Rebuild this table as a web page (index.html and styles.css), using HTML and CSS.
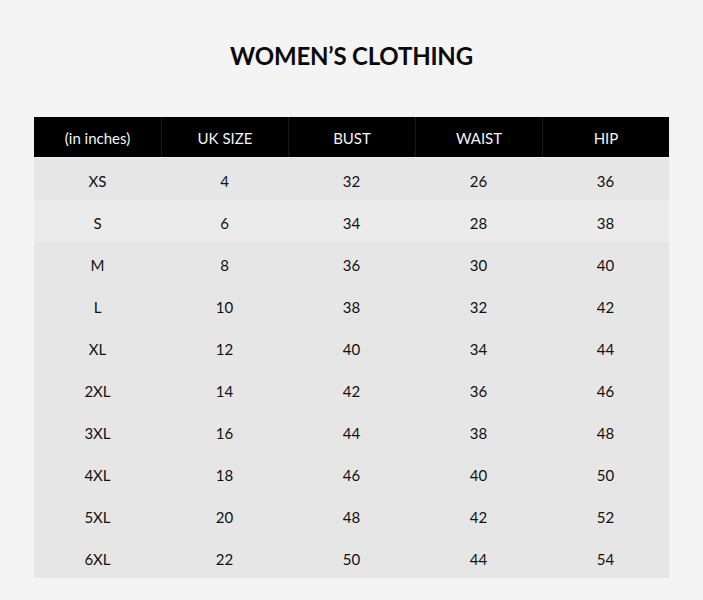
FILE: index.html
```html
<!DOCTYPE html>
<html lang="en">
<head>
<meta charset="utf-8">
<title>Women's Clothing Size Chart</title>
<link rel="stylesheet" href="styles.css">
</head>
<body>
<main class="page">
  <h1 class="title">WOMEN’S CLOTHING</h1>
  <div class="chart">
    <div class="row head">
      <div class="cell">(in inches)</div>
      <div class="cell">UK SIZE</div>
      <div class="cell">BUST</div>
      <div class="cell">WAIST</div>
      <div class="cell">HIP</div>
    </div>
    <div class="row"><div class="cell">XS</div><div class="cell">4</div><div class="cell">32</div><div class="cell">26</div><div class="cell">36</div></div>
    <div class="row light"><div class="cell">S</div><div class="cell">6</div><div class="cell">34</div><div class="cell">28</div><div class="cell">38</div></div>
    <div class="row"><div class="cell">M</div><div class="cell">8</div><div class="cell">36</div><div class="cell">30</div><div class="cell">40</div></div>
    <div class="row"><div class="cell">L</div><div class="cell">10</div><div class="cell">38</div><div class="cell">32</div><div class="cell">42</div></div>
    <div class="row"><div class="cell">XL</div><div class="cell">12</div><div class="cell">40</div><div class="cell">34</div><div class="cell">44</div></div>
    <div class="row"><div class="cell">2XL</div><div class="cell">14</div><div class="cell">42</div><div class="cell">36</div><div class="cell">46</div></div>
    <div class="row"><div class="cell">3XL</div><div class="cell">16</div><div class="cell">44</div><div class="cell">38</div><div class="cell">48</div></div>
    <div class="row"><div class="cell">4XL</div><div class="cell">18</div><div class="cell">46</div><div class="cell">40</div><div class="cell">50</div></div>
    <div class="row"><div class="cell">5XL</div><div class="cell">20</div><div class="cell">48</div><div class="cell">42</div><div class="cell">52</div></div>
    <div class="row"><div class="cell">6XL</div><div class="cell">22</div><div class="cell">50</div><div class="cell">44</div><div class="cell">54</div></div>
  </div>
</main>
</body>
</html>
```
FILE: styles.css
```css
html, body {
  margin: 0;
  padding: 0;
  background: #f4f4f4;
}

.page {
  padding: 41px 34px 22px;
  font-family: Lato, "Open Sans", sans-serif;
  color: #111;
}

.title {
  margin: 0 0 46px;
  font-size: 24px;
  line-height: 30px;
  font-weight: 700;
  letter-spacing: -0.2px;
  text-align: center;
  color: #0a0a0a;
}

.chart {
  display: flex;
  flex-direction: column;
}

.row {
  display: grid;
  grid-template-columns: repeat(5, 1fr);
  height: 42px;
  background: #e6e6e6;
}

.row.light {
  background: #ebebeb;
}

.row.head {
  height: 40px;
  background: #000;
  color: #f4f4f4;
  border-bottom: 1px solid #f2f2f2;
}

.cell {
  display: flex;
  align-items: center;
  justify-content: center;
  padding-top: 3px;
  font-size: 15px;
  line-height: 18px;
}

.head .cell {
  padding-top: 2px;
}

.head .cell + .cell {
  border-left: 1px solid #1a1a1a;
}
```
